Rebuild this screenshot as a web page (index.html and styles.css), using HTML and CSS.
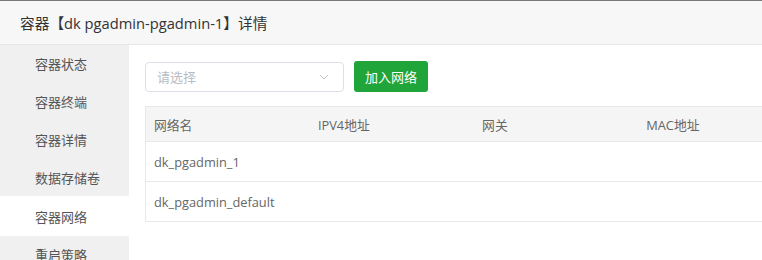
FILE: index.html
```html
<!DOCTYPE html>
<html lang="zh-CN">
<head>
<meta charset="utf-8">
<link rel="stylesheet" href="styles.css">
</head>
<body>
<div class="dialog">
  <div class="title">容器【dk pgadmin-pgadmin-1】详情</div>
  <div class="main">
    <ul class="menu">
      <li class="item">容器状态</li>
      <li class="item">容器终端</li>
      <li class="item">容器详情</li>
      <li class="item">数据存储卷</li>
      <li class="item active">容器网络</li>
      <li class="item">重启策略</li>
    </ul>
    <div class="content">
      <div class="toolbar">
        <div class="select">
          <span class="placeholder">请选择</span>
          <svg class="chevron" width="10" height="6" viewBox="0 0 10 6"><path d="M1 1 L5 5 L9 1" fill="none" stroke="#c0c4cc" stroke-width="1"/></svg>
        </div>
        <button class="btn">加入网络</button>
      </div>
      <table class="table">
        <thead>
          <tr><th>网络名</th><th>IPV4地址</th><th>网关</th><th>MAC地址</th></tr>
        </thead>
        <tbody>
          <tr><td>dk_pgadmin_1</td><td></td><td></td><td></td></tr>
          <tr><td>dk_pgadmin_default</td><td></td><td></td><td></td></tr>
        </tbody>
      </table>
    </div>
  </div>
</div>
</body>
</html>
```
FILE: styles.css
```css
* { box-sizing: border-box; }
html, body { margin: 0; padding: 0; }
body {
  width: 762px;
  height: 260px;
  overflow: hidden;
  background: #fff;
  font-family: "Open Sans", "Noto Sans CJK SC", sans-serif;
  color: #666;
}
.dialog { display: flex; flex-direction: column; height: 260px; overflow: hidden; }
.title {
  flex: none;
  height: 45px;
  border-top: 1px solid #7a7a7a;
  border-bottom: 1px solid #e8e8e8;
  background: #f7f7f7;
  padding-left: 20px;
  display: flex;
  align-items: center;
  font-size: 14.7px;
  color: #333;
}
.main { flex: 1; display: flex; min-height: 0; overflow: hidden; }
.menu {
  flex: none;
  width: 129px;
  margin: 0;
  padding: 0;
  list-style: none;
  background: #f0f0f0;
}
.item {
  height: 37.75px;
  display: flex;
  align-items: center;
  padding-left: 35px;
  font-size: 13px;
  color: #555;
}
.item.active { background: #fff; height: 40px; }
.content { flex: 1; padding: 16px 0 0 16px; min-width: 0; overflow: hidden; }
.toolbar { display: flex; align-items: center; gap: 10px; }
.select {
  width: 199px;
  height: 30px;
  border: 1px solid #dcdfe6;
  border-radius: 4px;
  display: flex;
  align-items: center;
  justify-content: space-between;
  padding: 0 14px 0 11px;
  font-size: 13px;
}
.placeholder { color: #b8bcc4; }
.btn {
  height: 31px;
  width: 74px;
  border: none;
  border-radius: 3px;
  background: #20a53a;
  color: #fff;
  font-family: inherit;
  font-size: 13px;
  padding: 0;
}
.table {
  margin-top: 14px;
  width: 658px;
  border-collapse: collapse;
  border: 1px solid #e8e8ec;
  font-size: 12.8px;
}
.table th, .table td {
  width: 164.5px;
  text-align: left;
  font-weight: normal;
  padding: 0 8px;
  color: #666;
}
.table th { height: 35px; background: #f5f5f5; border-bottom: 1px solid #e8e8ec; }
.table td { height: 40px; border-bottom: 1px solid #e8e8ec; }
```
